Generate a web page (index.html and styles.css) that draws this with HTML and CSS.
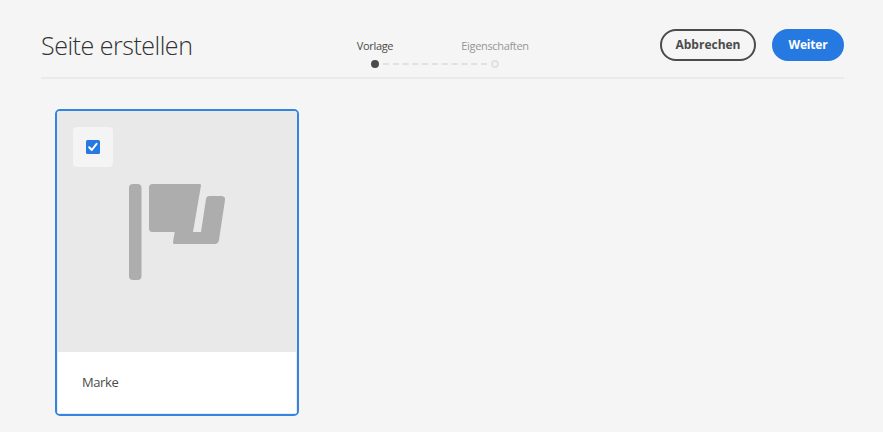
FILE: index.html
```html
<!DOCTYPE html>
<html lang="de">
<head>
<meta charset="utf-8">
<title>Seite erstellen</title>
<link rel="stylesheet" href="styles.css">
</head>
<body>
<header class="header">
  <h1 class="title"><span>Seite erstellen</span></h1>
  <ol class="steps">
    <li class="step step-active"><span class="step-label">Vorlage</span><span class="dot"></span></li>
    <li class="track"><svg width="106" height="2" viewBox="0 0 106 2"><path d="M1 1H106" stroke="#e1e1e1" stroke-width="2" stroke-dasharray="6 3.8"/></svg></li>
    <li class="step"><span class="step-label">Eigenschaften</span><span class="dot"></span></li>
  </ol>
  <div class="actions">
    <button class="button cancel" type="button">Abbrechen</button>
    <button class="button next" type="button">Weiter</button>
  </div>
</header>
<main class="content">
  <article class="card">
    <div class="preview">
      <span class="select"><svg width="14" height="14" viewBox="0 0 14 14"><rect width="14" height="14" rx="1.5" fill="#2679e0"/><path d="M3.2 7.2L5.8 10L10.6 3.9" fill="none" stroke="#fff" stroke-width="2" stroke-linecap="round" stroke-linejoin="round"/></svg></span>
      <svg class="flag" width="96" height="96" viewBox="0 0 96 96" fill="#adadad"><rect width="12.5" height="96" rx="4"/><path d="M23.5 0H70.5Q72.2 0 72 1.6L64 48H72L77 15Q77.5 12 80.5 12H92Q96.5 12 96 16L90 56Q89.4 60 85.5 60H45.5Q43.7 60 44 58.3L45.7 48H23.5Q20 48 20 44.5V3.5Q20 0 23.5 0Z"/></svg>
    </div>
    <div class="caption">Marke</div>
  </article>
</main>
</body>
</html>
```

FILE: styles.css
```css
* { box-sizing: border-box; }
body {
  margin: 0;
  padding: 0 39px 0 41px;
  height: 432px;
  overflow: hidden;
  background: #f5f5f5;
  color: #4b4b4b;
  font-family: "Open Sans", "Noto Sans", sans-serif;
}
.header {
  display: grid;
  grid-template-columns: 274px 1fr auto;
  height: 79px;
  border-bottom: 2px solid #eaeaea;
}
.title {
  margin: 0;
  padding-top: 28px;
  font-size: 25px;
  line-height: 34px;
  font-weight: 300;
  letter-spacing: -0.48px;
  color: #323232;
  white-space: nowrap;
}
.steps {
  display: flex;
  margin: 0;
  padding: 38px 0 0;
  list-style: none;
  font-size: 11px;
  line-height: 16px;
}
.step {
  display: flex;
  flex-direction: column;
  align-items: center;
  width: 120px;
  color: #959595;
}
.step-label { letter-spacing: -0.33px; white-space: nowrap; }
.step-active { color: #4b4b4b; }
.dot {
  width: 8px;
  height: 8px;
  margin-top: 6px;
  border: 2px solid #e1e1e1;
  border-radius: 50%;
}
.step-active .dot { border-color: #4b4b4b; background: #4b4b4b; }
.track { width: 106px; margin: 25px -53px 0; }
.track svg { display: block; }
.actions { display: flex; gap: 16px; padding-top: 29px; }
.button {
  height: 32px;
  padding: 0;
  border: 2px solid #4b4b4b;
  border-radius: 16px;
  background: transparent;
  color: #4b4b4b;
  font: 700 12px/28px "Open Sans", "Noto Sans", sans-serif;
}
.cancel { width: 96px; }
.next { width: 72px; border-color: #2679e0; background: #2679e0; color: #fff; letter-spacing: -0.2px; }
.content { padding: 30px 14px; }
.card {
  width: 244px;
  height: 307px;
  overflow: hidden;
  border: 2px solid #3385e2;
  border-radius: 5px;
  background: #fff;
}
.preview {
  position: relative;
  display: flex;
  align-items: flex-start;
  height: 241px;
  padding: 73px 72px 0;
  background: #e9e9e9;
}
.select {
  position: absolute;
  top: 16px;
  left: 16px;
  display: grid;
  place-items: center;
  width: 40px;
  height: 40px;
  border-radius: 4px;
  background: #f4f4f4;
}
.select svg, .flag { display: block; }
.flag { flex: none; }
.caption {
  height: 62px;
  padding-left: 24px;
  border: solid #eaeaea;
  border-width: 0 1px 1px;
  font-size: 13px;
  line-height: 60px;
  letter-spacing: -0.4px;
}
```
